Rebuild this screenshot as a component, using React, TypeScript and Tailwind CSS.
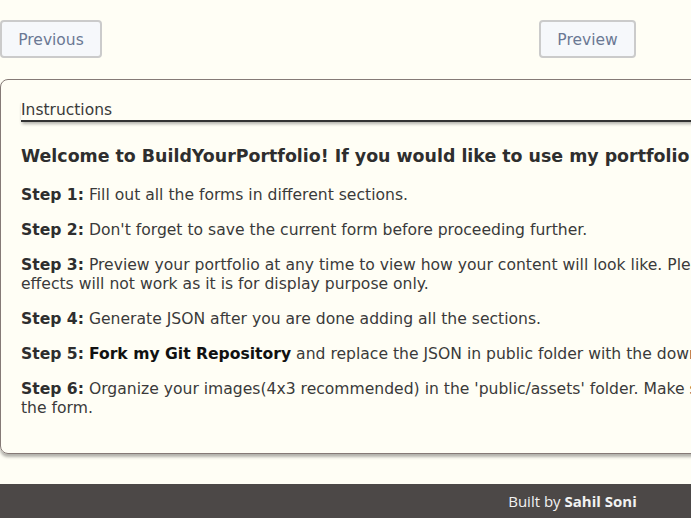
const steps: { label: string; body: React.ReactNode }[] = [
  { label: "Step 1:", body: "Fill out all the forms in different sections." },
  { label: "Step 2:", body: "Don't forget to save the current form before proceeding further." },
  {
    label: "Step 3:",
    body: (
      <>
        Preview your portfolio at any time to view how your content will look like. Please note that some
        <br />
        effects will not work as it is for display purpose only.
      </>
    ),
  },
  { label: "Step 4:", body: "Generate JSON after you are done adding all the sections." },
  {
    label: "Step 5:",
    body: (
      <>
        <span className="font-bold text-[#111]">Fork my Git Repository</span> and replace the JSON in public folder with the downloaded JSON file.
      </>
    ),
  },
  {
    label: "Step 6:",
    body: (
      <>
        Organize your images(4x3 recommended) in the 'public/assets' folder. Make sure the image names match the names entered in
        <br />
        the form.
      </>
    ),
  },
];

export default function App() {
  return (
    <div className="w-[691px] min-h-[518px] overflow-hidden bg-[#fffef5]">
      <div className="w-[1175px] font-['DejaVu_Sans',sans-serif] text-[#3a3a3a]">
        <div className="grid grid-cols-3 items-center pt-[20px]">
          <button className="justify-self-start h-[38px] w-[102px] rounded border-2 border-[#cbcbcb] bg-[#f6f8fb] pt-[3px] text-[15.5px] text-[#6b7894]">
            Previous
          </button>
          <button className="justify-self-center h-[38px] w-[97px] rounded border-2 border-[#cbcbcb] bg-[#f6f8fb] pt-[3px] text-[15.5px] text-[#6b7894]">
            Preview
          </button>
          <button className="justify-self-end h-[38px] w-[80px] rounded border-2 border-[#cbcbcb] bg-[#f6f8fb] pt-[3px] text-[15.5px] text-[#6b7894]">
            Next
          </button>
        </div>

        <div className="mt-[21px] w-[1160px] rounded-lg border border-[#857a76] shadow-[0_3px_3px_rgba(0,0,0,0.3)] px-[20px] pt-[20px] pb-[19px]">
          <div className="border-b-2 border-[#333] text-[15.5px] leading-[20px] shadow-[0_3px_3px_-1px_rgba(0,0,0,0.3)]">
            Instructions
          </div>
          <h3 className="mt-[23px] mb-[19px] text-[17.4px] leading-[22px] font-bold text-[#2e2e2e] whitespace-nowrap">
            Welcome to BuildYourPortfolio! If you would like to use my portfolio template, follow the steps below:
          </h3>
          {steps.map((s) => (
            <p key={s.label} className="mb-[16px] text-[15.6px] leading-[19px] whitespace-nowrap">
              <span className="font-bold text-[#2e2e2e]">{s.label}</span> {s.body}
            </p>
          ))}
        </div>

        <footer className="mt-[30px] h-[40px] bg-[#4c4847] pr-[30px] text-center font-['Open_Sans',sans-serif] text-[15px] leading-[34px] text-[#f2f2f2]">
          Built by <span className="font-bold">Sahil Soni</span>
        </footer>
      </div>
    </div>
  );
}
